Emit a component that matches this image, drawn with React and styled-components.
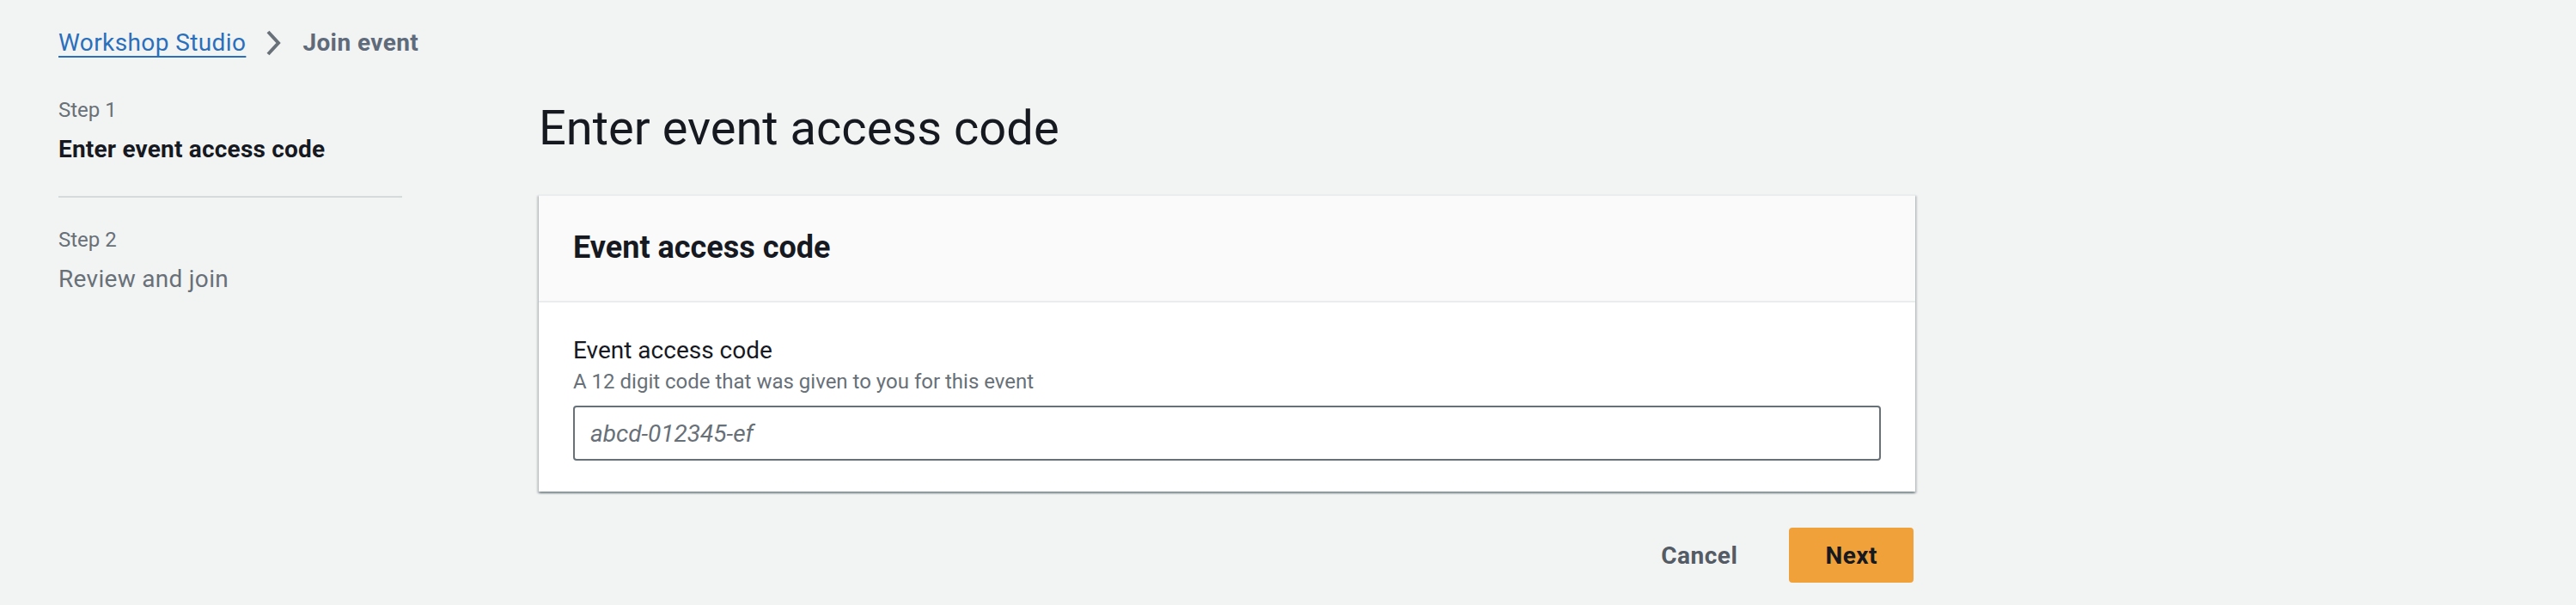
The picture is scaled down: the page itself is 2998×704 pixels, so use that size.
import React from 'react';
import styled, { createGlobalStyle } from 'styled-components';

const GlobalStyle = createGlobalStyle`
  html, body {
    margin: 0;
    padding: 0;
    background: #f2f3f3;
  }
  body {
    font-family: Roboto, "Open Sans", "Liberation Sans", sans-serif;
    color: #16191f;
    -webkit-font-smoothing: antialiased;
  }
  * {
    box-sizing: border-box;
  }
`

const Page = styled.div`
  min-height: 704px;
  padding: 30px 0 0 68px;
`

const Breadcrumbs = styled.nav`
  display: flex;
  align-items: center;
  height: 40px;
  font-size: 28px;
  line-height: 40px;
  letter-spacing: 0.4px;
`

const CrumbLink = styled.a`
  color: #2a6fbc;
  text-decoration: underline;
  text-decoration-thickness: 2px;
  text-underline-offset: 6px;
  cursor: pointer;
`

const CrumbSeparator = styled.span`
  display: flex;
  align-items: center;
  margin: 0 24px 0 22px;
`

const CrumbCurrent = styled.span`
  color: #5f6b7a;
  font-weight: 700;
`

const Layout = styled.div`
  display: grid;
  grid-template-columns: 400px 1602px;
  column-gap: 159px;
  margin-top: 42px;
`

const StepNav = styled.ol`
  list-style: none;
  margin: 0;
  padding: 0;
`

const StepItem = styled.li`
  display: flex;
  flex-direction: column;
  gap: 10px;
  padding-bottom: ${p => (p.$last ? '0' : '34px')};
  margin-bottom: ${p => (p.$last ? '0' : '33px')};
  border-bottom: ${p => (p.$last ? 'none' : '2px solid #d5dbdb')};
`

const StepLabel = styled.span`
  font-size: 24px;
  line-height: 32px;
  color: #687078;
`

const StepTitle = styled.span`
  font-size: 28px;
  line-height: 40px;
  letter-spacing: ${p => (p.$active ? '0.2px' : '0.3px')};
  font-weight: ${p => (p.$active ? 700 : 400)};
  color: ${p => (p.$active ? '#16191f' : '#687078')};
`

const Main = styled.main`
  display: flex;
  flex-direction: column;
`

const Heading = styled.h1`
  margin: 1px 0 41px;
  font-size: 56px;
  line-height: 72px;
  font-weight: 400;
  color: #16191f;
`

const Card = styled.section`
  background: #ffffff;
  border-top: 2px solid #eaeded;
  box-shadow: 0 2px 2px 0 rgba(0, 28, 36, 0.3), 2px 2px 2px 0 rgba(0, 28, 36, 0.15),
    -2px 2px 2px 0 rgba(0, 28, 36, 0.15);
`

const CardHeader = styled.header`
  background: #fafafa;
  padding: 38px 40px 40px;
  border-bottom: 2px solid #eaeded;
`

const CardTitle = styled.h2`
  margin: 0;
  font-size: 36px;
  line-height: 44px;
  font-weight: 700;
  color: #16191f;
`

const CardBody = styled.div`
  padding: 36px 40px 36px;
`

const FieldLabel = styled.label`
  display: block;
  font-size: 28px;
  line-height: 40px;
  color: #16191f;
`

const FieldHint = styled.div`
  font-size: 24px;
  line-height: 32px;
  color: #687078;
  margin-bottom: 12px;
`

const TextInput = styled.input`
  display: block;
  width: 100%;
  height: 64px;
  padding: 0 18px;
  border: 2px solid #687078;
  border-radius: 4px;
  background: #ffffff;
  font-family: inherit;
  font-size: 28px;
  color: #16191f;
  outline: none;

  &::placeholder {
    color: #687078;
    font-style: italic;
  }
`

const Actions = styled.div`
  display: flex;
  justify-content: flex-end;
  align-items: center;
  gap: 18px;
  margin-top: 42px;
  padding-right: 2px;
`

const Button = styled.button`
  height: 64px;
  padding: 0 40px;
  border: 2px solid ${p => (p.$primary ? '#f0a13a' : 'transparent')};
  border-radius: 4px;
  background: ${p => (p.$primary ? '#f0a13a' : 'transparent')};
  color: ${p => (p.$primary ? '#16191f' : '#545b64')};
  font-family: inherit;
  font-size: 28px;
  font-weight: 700;
  letter-spacing: 0.5px;
  cursor: pointer;
`

const Chevron = () => (
  <svg width="20" height="32" viewBox="0 0 20 32" fill="none">
    <polyline points="4,3 16,16 4,29" stroke="#687078" strokeWidth="4" strokeLinejoin="miter" />
  </svg>
)

const steps = [
  { label: 'Step 1', title: 'Enter event access code', active: true },
  { label: 'Step 2', title: 'Review and join', active: false },
]

const App = () => {
  return (
    <>
      <GlobalStyle />
      <Page>
        <Breadcrumbs>
          <CrumbLink>Workshop Studio</CrumbLink>
          <CrumbSeparator>
            <Chevron />
          </CrumbSeparator>
          <CrumbCurrent>Join event</CrumbCurrent>
        </Breadcrumbs>
        <Layout>
          <StepNav>
            {steps.map((step, index) => (
              <StepItem key={step.label} $last={index === steps.length - 1}>
                <StepLabel>{step.label}</StepLabel>
                <StepTitle $active={step.active}>{step.title}</StepTitle>
              </StepItem>
            ))}
          </StepNav>
          <Main>
            <Heading>Enter event access code</Heading>
            <Card>
              <CardHeader>
                <CardTitle>Event access code</CardTitle>
              </CardHeader>
              <CardBody>
                <FieldLabel htmlFor="access-code">Event access code</FieldLabel>
                <FieldHint>A 12 digit code that was given to you for this event</FieldHint>
                <TextInput id="access-code" placeholder="abcd-012345-ef" />
              </CardBody>
            </Card>
            <Actions>
              <Button>Cancel</Button>
              <Button $primary>Next</Button>
            </Actions>
          </Main>
        </Layout>
      </Page>
    </>
  );
};

export default App;
